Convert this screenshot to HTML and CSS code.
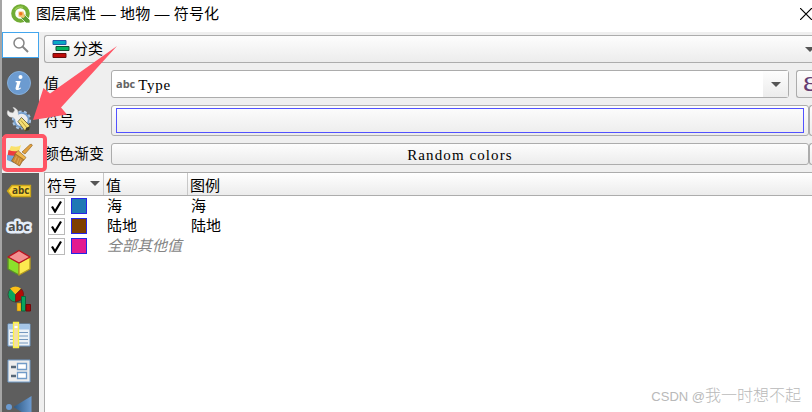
FILE: index.html
```html
<!DOCTYPE html>
<html lang="zh-CN">
<head>
  <meta charset="UTF-8">
  <title>图层属性 — 地物 — 符号化</title>
  <link rel="stylesheet" href="styles.css">
</head>
<body>
  <div class="window">
    <header class="titlebar">
      <svg class="logo" width="20" height="20" viewBox="0 0 20 20">
        <circle cx="9.5" cy="9.5" r="7.3" fill="none" stroke="#72ad35" stroke-width="4"/>
        <path d="M4 6a6.500 6.500 0 0 1 8-2.500" fill="none" stroke="#9dcc55" stroke-width="1.500"/>
        <path d="M10 10h3l6 6v3h-4l-5-5z" fill="#5d9d32" stroke="#fff" stroke-width=".7"/>
        <path d="M7.500 7.500h5l1.500 5-1.500 1.500-5-1.500z" fill="#f3c573"/>
        <circle cx="9.8" cy="9.8" r="1.700" fill="#ee7320"/>
      </svg>
      <h1>图层属性 — 地物 — 符号化</h1>
      <svg class="close" width="12" height="12" viewBox="0 0 12 12"><path d="M0 0l12 12M12 0L0 12" stroke="#000" stroke-width="1.2"/></svg>
    </header>

    <div class="main">
      <nav class="sidebar">
        <div class="search">
          <svg width="18" height="18" viewBox="0 0 18 18" fill="none" stroke="#858585">
            <circle cx="7" cy="7" r="5" stroke-width="1.5"/><path d="M10.500 10.500l5.500 5.500" stroke-width="2"/>
          </svg>
        </div>
        <!-- information -->
        <div class="tab">
          <svg width="26" height="26" viewBox="0 0 26 26">
            <circle cx="13" cy="13" r="11.5" fill="#6c9bd0" stroke="#86afda"/>
            <circle cx="14.5" cy="7" r="2" fill="#fff"/>
            <path d="M9.7 11h5l-2.2 7.4 2.6-1-.3 1.2c-2.5 2.2-5.9 2-5.2-.9l1.4-5.1-1.5-.4z" fill="#fff"/>
          </svg>
        </div>
        <!-- source -->
        <div class="tab">
          <svg width="26" height="26" viewBox="0 0 26 26">
            <circle cx="15.500" cy="14" r="7.200" fill="#eee" stroke="#729dcb" stroke-width="2"/>
            <circle cx="15.500" cy="14" r="8.700" fill="none" stroke="#a8c5e5" stroke-width="1.800" stroke-dasharray="3 2.400"/>
            <path d="M7 1.500l2 2.500-2 3-3-.5L2 4.500c-2 3 .5 7.500 5 6.500L18 22.500l3-3L12 8.500c.5-3-1-6.500-5-7z" fill="#eee" stroke="#ddd" stroke-width=".5"/>
            <path d="M15.500 11.500l8.500 8.500-1 4-4 1-7-9.500z" fill="#f3de74" stroke="#57532f" stroke-width=".8"/>
            <path d="M15 14.500l6.500 8" stroke="#ba9d35"/>
            <path d="M24 20l-1 4-4 1 1-3z" fill="#3d3a28"/>
          </svg>
        </div>
        <!-- symbology -->
        <div class="tab active">
          <svg width="28" height="26" viewBox="0 0 28 26">
            <path d="M6 4q7 2 10-1l-2 7-11 1z" fill="#fae16a"/>
            <path d="M3.500 8q5 2 9 1l-3 6-7-1z" fill="#ee3c3f"/>
            <path d="M2 13l9 1-2 7-7-3z" fill="#75a8dc"/>
            <path d="M17 10L25 2.500q2-1 2.300 1L20 12z" fill="#e4a13c" stroke="#946a2c" stroke-width=".7"/>
            <path d="M13 8.500l8 7-2.500 3-9-6z" fill="#efb64c" stroke="#946a2c" stroke-width=".7"/>
            <path d="M10.500 12l8 5.500-4 6.500-8-5z" fill="#c98932" stroke="#895b22" stroke-width=".7"/>
            <path d="M11.500 14.500l-2 5M14 16l-2 5.500M16 17.500l-2 5" stroke="#e9b668" stroke-width=".7"/>
          </svg>
        </div>
        <!-- labels -->
        <div class="tab">
          <svg width="26" height="26" viewBox="0 0 26 26">
            <path d="M1.500 13L6 7.500h18.500v11H6z" fill="#fcd53e" stroke="#c9a519" stroke-width="1.300"/>
            <text x="6" y="16.200" class="tag-text">abc</text>
          </svg>
        </div>
        <!-- masks -->
        <div class="tab">
          <svg width="28" height="26" viewBox="0 0 28 26"><text x="3" y="17" class="mask-text">abc</text></svg>
        </div>
        <!-- 3D view -->
        <div class="tab">
          <svg width="26" height="28" viewBox="0 0 26 28" stroke-width="1.400" stroke-linejoin="round">
            <path d="M2 8l11 6v12L2 20z" fill="#8ce02b" stroke="#5b9227"/>
            <path d="M24 8l-11 6v12l11-6z" fill="#fce94f" stroke="#b49b20"/>
            <path d="M13 1.500L24 8l-11 6L2 8z" fill="#f49090" stroke="#b91420"/>
          </svg>
        </div>
        <!-- diagrams -->
        <div class="tab">
          <svg width="26" height="26" viewBox="0 0 26 26">
            <circle cx="9.500" cy="8.500" r="7.500" fill="#09a55e" stroke="#34513b"/>
            <path d="M9.500 8.500L4 2.500q5.500-4 11 0z" fill="#fcbe18"/>
            <path d="M9.500 8.500l6-5.500q4 5 0 10.500l-6 2.500z" fill="#b60b06" stroke="#6e1414" stroke-width=".7"/>
            <path d="M11 17h4v8h-4z" fill="#fcbe18" stroke="#a27a18" stroke-width=".5"/>
            <path d="M15.500 10.500h4V25h-4z" fill="#09a55e" stroke="#0b663d"/>
            <path d="M20 18.500h4.500V25H20z" fill="#a20b08" stroke="#710909"/>
          </svg>
        </div>
        <!-- fields -->
        <div class="tab">
          <svg width="26" height="28" viewBox="0 0 26 28">
            <path d="M2 3h22v22H2z" fill="#edf2f7" stroke="#719bc8"/>
            <path d="M2.500 3.500h21v5h-21z" fill="#a4c5e8"/>
            <path d="M4 11.500h18M4 15h18M4 18.500h18M4 22h18" stroke="#7598bf"/>
            <path d="M7.500 1.500h5v25h-5z" fill="#f2deaa" stroke="#fcf341" stroke-width="1.300"/>
            <path d="M8.500 5h3v2h-3z" fill="#fff"/>
          </svg>
        </div>
        <!-- attributes form -->
        <div class="tab">
          <svg width="26" height="26" viewBox="0 0 26 26">
            <path d="M2 2h22v22H2z" fill="#ededed" stroke="#719bc8"/>
            <path d="M5 9h5M5 18h5" stroke="#566778" stroke-width="2.500"/>
            <path d="M11.500 5.500h9v6h-9zM11.500 14.500h9v6h-9z" fill="#fff" stroke="#719bc8" stroke-width="1.300"/>
          </svg>
        </div>
        <!-- joins -->
        <div class="tab">
          <svg width="28" height="26" viewBox="0 0 28 26">
            <defs><linearGradient id="join"><stop stop-color="#2c5782"/><stop offset="1" stop-color="#6c9bd0"/></linearGradient></defs>
            <circle cx="4" cy="13" r="3" fill="#6c9bd0"/>
            <path d="M8.500 13L26.500 2v22z" fill="url(#join)"/>
          </svg>
        </div>
      </nav>

      <main class="content">
        <div class="combo renderer">
          <svg width="18" height="18" viewBox="0 0 18 18">
            <path d="M1 .5h13v4H1z" fill="#08a9c4" stroke="#2459a9"/>
            <path d="M4 6.500h13v4H4z" fill="#08b360" stroke="#134e31"/>
            <path d="M1 13.500h13v4H1z" fill="#bd0b08" stroke="#680c0c"/>
          </svg>
          <span>分类</span>
          <i class="arrow"></i>
        </div>

        <div class="row value-row">
          <label>值</label>
          <div class="combo field">
            <b>abc</b><span class="mono type">Type</span>
            <div class="drop"><i class="arrow"></i></div>
          </div>
          <div class="button expression">ε</div>
        </div>

        <div class="row symbol-row">
          <label>符号</label>
          <div class="button symbol"><div class="symbol-preview"></div></div>
          <div class="button more"></div>
        </div>

        <div class="row ramp-row">
          <label>颜色渐变</label>
          <div class="button ramp mono">Random colors</div>
          <div class="button more"></div>
        </div>

        <div class="tree">
          <div class="tree-head">
            <div>符号<i class="arrow"></i></div>
            <div>值</div>
            <div>图例</div>
          </div>
          <div class="tree-row">
            <div class="check"><svg width="13" height="13" viewBox="0 0 13 13"><path d="M2 6.500l3 5L11 1.500"/></svg></div>
            <div class="swatch sea"></div><span class="name">海</span><span>海</span>
          </div>
          <div class="tree-row">
            <div class="check"><svg width="13" height="13" viewBox="0 0 13 13"><path d="M2 6.500l3 5L11 1.500"/></svg></div>
            <div class="swatch land"></div><span class="name">陆地</span><span>陆地</span>
          </div>
          <div class="tree-row">
            <div class="check"><svg width="13" height="13" viewBox="0 0 13 13"><path d="M2 6.500l3 5L11 1.500"/></svg></div>
            <div class="swatch other"></div><span class="name rest">全部其他值</span>
          </div>
        </div>
      </main>
    </div>

    <!-- pointer to the symbology tab -->
    <div class="highlight"></div>
    <svg class="pointer" width="90" height="90" viewBox="0 0 90 90"><path d="M87 6L20 53.500 13.500 48 3 80l34-5.500-6-7z" fill="#ff5565"/></svg>
    <div class="watermark"><span>CSDN @</span>我一时想不起</div>
  </div>
</body>
</html>
```

FILE: styles.css
```css
* {
  box-sizing: border-box;
}

body {
  margin: 0;
  font: 15px/20px "Liberation Sans", "Noto Sans CJK SC", sans-serif;
  color: #000;
}

.window {
  position: relative;
  width: 812px;
  height: 412px;
  overflow: hidden;
  background: #efefef;
  border-left: 2px solid #a5a5a5;
  display: flex;
  flex-direction: column;
}

.titlebar {
  flex: 0 0 32px;
  display: flex;
  align-items: center;
  background: #fff;
  padding: 0 0 5px 9px;
}

.titlebar h1 {
  margin: 0 auto 0 5px;
  font-size: 15px;
  font-weight: normal;
  letter-spacing: .1px;
  white-space: nowrap;
}

.close {
  flex: none;
}

.main {
  flex: 1;
  min-height: 0;
  display: flex;
}

.sidebar {
  flex: 0 0 37px;
  background: #5e5e5e;
  overflow: hidden;
}

.search {
  height: 26px;
  margin-bottom: 7px;
  background: #fff;
  border: 1.5px solid #43a6ee;
  display: flex;
  align-items: center;
  justify-content: center;
}

.tab {
  height: 36px;
  display: flex;
  align-items: center;
  justify-content: center;
  padding-right: 3px;
}

.tab.active {
  background: #efefef;
}

.tab svg {
  flex: none;
}

.tag-text {
  font: bold 10px "Open Sans", sans-serif;
  fill: #4b431b;
}

.mask-text {
  font: bold 12.5px "Open Sans", sans-serif;
  fill: #4c4c4c;
  stroke: #e4edf9;
  stroke-width: 5px;
  stroke-linejoin: round;
  paint-order: stroke;
}

.content {
  flex: 1;
  min-width: 0;
  padding: 3px 0 0 5px;
  display: flex;
  flex-direction: column;
}

.combo,
.button {
  border: 1px solid #acacac;
  border-radius: 3px;
  background: linear-gradient(#fdfdfd, #ececec);
}

.combo {
  display: flex;
  align-items: center;
}

.arrow {
  width: 0;
  height: 0;
  border: 5px solid transparent;
  border-top-color: #555;
  border-bottom: 0;
}

.renderer {
  height: 28px;
  margin-bottom: 7px;
  border-right: 0;
  border-radius: 3px 0 0 3px;
  padding-left: 7px;
}

.renderer span {
  margin: 0 auto 0 3px;
}

.renderer .arrow {
  margin-right: -3px;
}

.row {
  display: flex;
}

.row label {
  flex: 0 0 67px;
  align-self: center;
  white-space: nowrap;
}

.value-row {
  height: 28px;
  margin-bottom: 7px;
}

.field {
  width: 678px;
  background: #fff;
  padding-left: 4px;
}

.field b {
  font: bold 11px/18px "Open Sans", sans-serif;
  color: #646464;
}

.mono {
  font-family: "Liberation Serif", serif;
  letter-spacing: 1.1px;
}

.type {
  margin: 2px auto 0 3px;
  letter-spacing: .7px;
}

.drop {
  width: 25px;
  height: 26px;
  background: linear-gradient(#fdfdfd, #ececec);
  display: flex;
  align-items: center;
  justify-content: center;
}

.expression {
  flex: 1;
  margin-left: 7px;
  border-right: 0;
  border-radius: 3px 0 0 3px;
  padding-left: 6px;
  overflow: hidden;
  font: 30px/20px "Liberation Serif", serif;
  color: #653d72;
}

.symbol-row {
  height: 31px;
  margin-bottom: 7px;
}

.symbol {
  width: 698px;
  padding: 2px 4px;
}

.symbol-preview {
  height: 25px;
  border: 1px solid #5252ff;
}

.more {
  flex: 1;
  border-right: 0;
  border-radius: 3px 0 0 3px;
}

.ramp-row {
  height: 22px;
  margin-bottom: 7px;
}

.ramp {
  width: 698px;
  line-height: 23px;
  text-align: center;
}

.tree {
  flex: 1;
  border: 1px solid #acacac;
  border-width: 1px 0 0 1px;
  background: #fff;
}

.tree-head {
  height: 23px;
  display: flex;
  line-height: 25px;
  background: linear-gradient(#fff, #ececec);
  border-bottom: 1px solid #acacac;
}

.tree-head div {
  width: 84px;
  padding-left: 2px;
  border-right: 1px solid #c8c8c8;
}

.tree-head div:first-child {
  width: 59px;
  display: flex;
}

.tree-head div:last-child {
  flex: 1;
  border: 0;
}

.tree-head .arrow {
  margin: 8px 3px 0 auto;
}

.tree-row {
  height: 20px;
  display: flex;
  align-items: center;
  padding-left: 3px;
}

.check {
  width: 17px;
  height: 17px;
  border: 1px solid #bababa;
  display: flex;
  align-items: center;
  justify-content: center;
}

.check path {
  fill: none;
  stroke: #000;
  stroke-width: 2.2;
}

.swatch {
  width: 16px;
  height: 16px;
  margin: 0 20px 0 6px;
  border: 1px solid #2525e5;
}

.sea {
  background: #1f78b4;
}

.land {
  background: #7f3f00;
}

.other {
  background: #e31a90;
}

.name {
  width: 84px;
}

.rest {
  color: #858585;
  font-style: italic;
}

.highlight {
  position: absolute;
  left: 0;
  top: 134px;
  width: 45px;
  height: 38px;
  border: 4px solid #ff5565;
  border-radius: 5px;
}

.pointer {
  position: absolute;
  left: 28px;
  top: 40px;
}

.watermark {
  position: absolute;
  right: 11px;
  bottom: 5px;
  font-size: 16px;
  font-weight: 300;
  color: #b9b9b9;
  white-space: nowrap;
}

.watermark span {
  font-size: 13px;
}
```
